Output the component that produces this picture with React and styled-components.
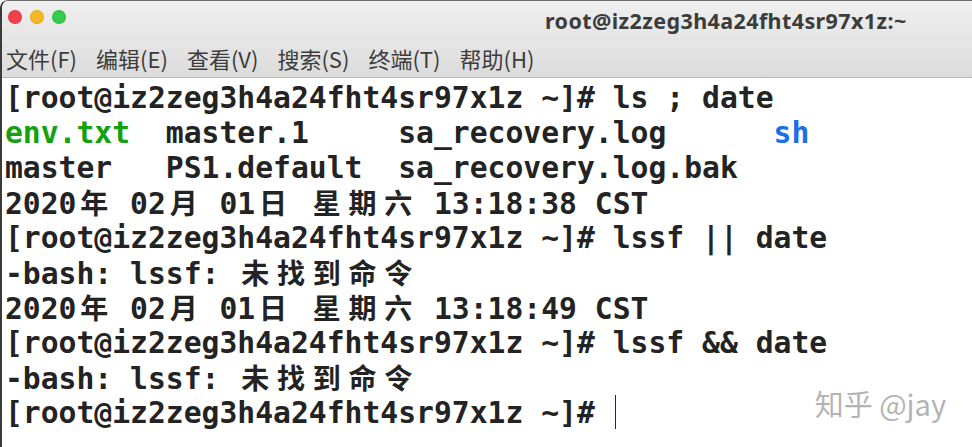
import styled, { createGlobalStyle } from 'styled-components';

const Global = createGlobalStyle`
  html, body {
    margin: 0;
    padding: 0;
    background: #ffffff;
    overflow: hidden;
  }
`;

const Window = styled.div`
  position: relative;
  width: 972px;
  height: 447px;
  display: flex;
  flex-direction: column;
  box-sizing: border-box;
  border-left: 2px solid #3b3b3b;
  border-top: 1px solid #6a6a6a;
  border-top-left-radius: 8px;
  overflow: hidden;
  background: #ffffff;
`;

const Header = styled.header`
  background: linear-gradient(#efefef, #dcdcdc);
  border-bottom: 1px solid #b8b8b8;
  display: flex;
  flex-direction: column;
`;

const TitleBar = styled.div`
  height: 38px;
  display: flex;
  align-items: center;
  padding-left: 6px;
`;

const Dots = styled.div`
  display: flex;
  gap: 8px;
  margin-bottom: 6px;
`;

const Dot = styled.span`
  width: 14px;
  height: 14px;
  border-radius: 50%;
  background: ${(p) => p.color};
  box-shadow: inset 0 0 0 1px rgba(0, 0, 0, 0.08);
`;

const Title = styled.h1`
  margin: 0 0 0 479px;
  font-family: "Noto Sans", "DejaVu Sans", sans-serif;
  font-weight: 700;
  font-size: 21.5px;
  letter-spacing: 0.4px;
  color: #3c3c3c;
`;

const MenuBar = styled.nav`
  height: 38px;
  display: flex;
  align-items: center;
  gap: 19px;
  padding-left: 4px;
`;

const MenuItem = styled.span`
  font-family: "Noto Sans CJK SC", "Noto Sans", sans-serif;
  font-size: 22px;
  color: #3c3c3c;
`;

const Screen = styled.main`
  flex: 1;
  padding: 2px 0 0 3px;
  font-family: "DejaVu Sans Mono", "Noto Sans CJK SC", monospace;
  font-weight: 700;
  font-size: 29.7px;
  line-height: 35px;
  color: #232323;
  white-space: pre;
`;

const Line = styled.div`
  height: 35px;
`;

const Wide = styled.span`
  display: inline-block;
  width: 35.76px;
  text-align: center;
  font-family: "Noto Sans CJK SC", sans-serif;
  font-size: 28px;
`;

const Colored = styled.span`
  color: ${(p) => p.color};
`;

const Cursor = styled.span`
  display: inline-block;
  width: 1px;
  height: 34px;
  margin-left: 2px;
  background: #2a2a2a;
  vertical-align: -6px;
`;

const Watermark = styled.div`
  position: absolute;
  right: 26px;
  bottom: 23px;
  font-family: "Noto Sans CJK SC", "Noto Sans", sans-serif;
  font-size: 29px;
  color: #b4b4b4;
  text-shadow: 0 0 1px rgba(255, 255, 255, 0.8);
`;

const isWide = (ch) => /[\u3000-\u9fff\uff00-\uffef]/.test(ch);

const Term = ({ text }) => {
  const parts = [];
  let buf = '';
  Array.from(text).forEach((ch, i) => {
    if (isWide(ch)) {
      if (buf) parts.push(buf);
      buf = '';
      parts.push(<Wide key={i}>{ch}</Wide>);
    } else {
      buf += ch;
    }
  });
  if (buf) parts.push(buf);
  return <>{parts}</>;
};

const prompt = '[root@iz2zeg3h4a24fht4sr97x1z ~]# ';
const menu = ['文件(F)', '编辑(E)', '查看(V)', '搜索(S)', '终端(T)', '帮助(H)'];

export default function App() {
  return (
    <>
      <Global />
      <Window>
        <Header>
          <TitleBar>
            <Dots>
              <Dot color="#f0404c" />
              <Dot color="#f6b727" />
              <Dot color="#35cd4b" />
            </Dots>
            <Title>root@iz2zeg3h4a24fht4sr97x1z:~</Title>
          </TitleBar>
          <MenuBar>
            {menu.map((m) => (
              <MenuItem key={m}>{m}</MenuItem>
            ))}
          </MenuBar>
        </Header>
        <Screen>
          <Line>{prompt}ls ; date</Line>
          <Line>
            <Colored color="#13a10e">env.txt</Colored>
            {'  master.1     sa_recovery.log      '}
            <Colored color="#1a6ee6">sh</Colored>
          </Line>
          <Line>master   PS1.default  sa_recovery.log.bak</Line>
          <Line><Term text="2020年 02月 01日 星期六 13:18:38 CST" /></Line>
          <Line>{prompt}lssf || date</Line>
          <Line><Term text="-bash: lssf: 未找到命令" /></Line>
          <Line><Term text="2020年 02月 01日 星期六 13:18:49 CST" /></Line>
          <Line>{prompt}lssf &amp;&amp; date</Line>
          <Line><Term text="-bash: lssf: 未找到命令" /></Line>
          <Line>{prompt}<Cursor /></Line>
        </Screen>
        <Watermark>知乎 @jay</Watermark>
      </Window>
    </>
  );
}
